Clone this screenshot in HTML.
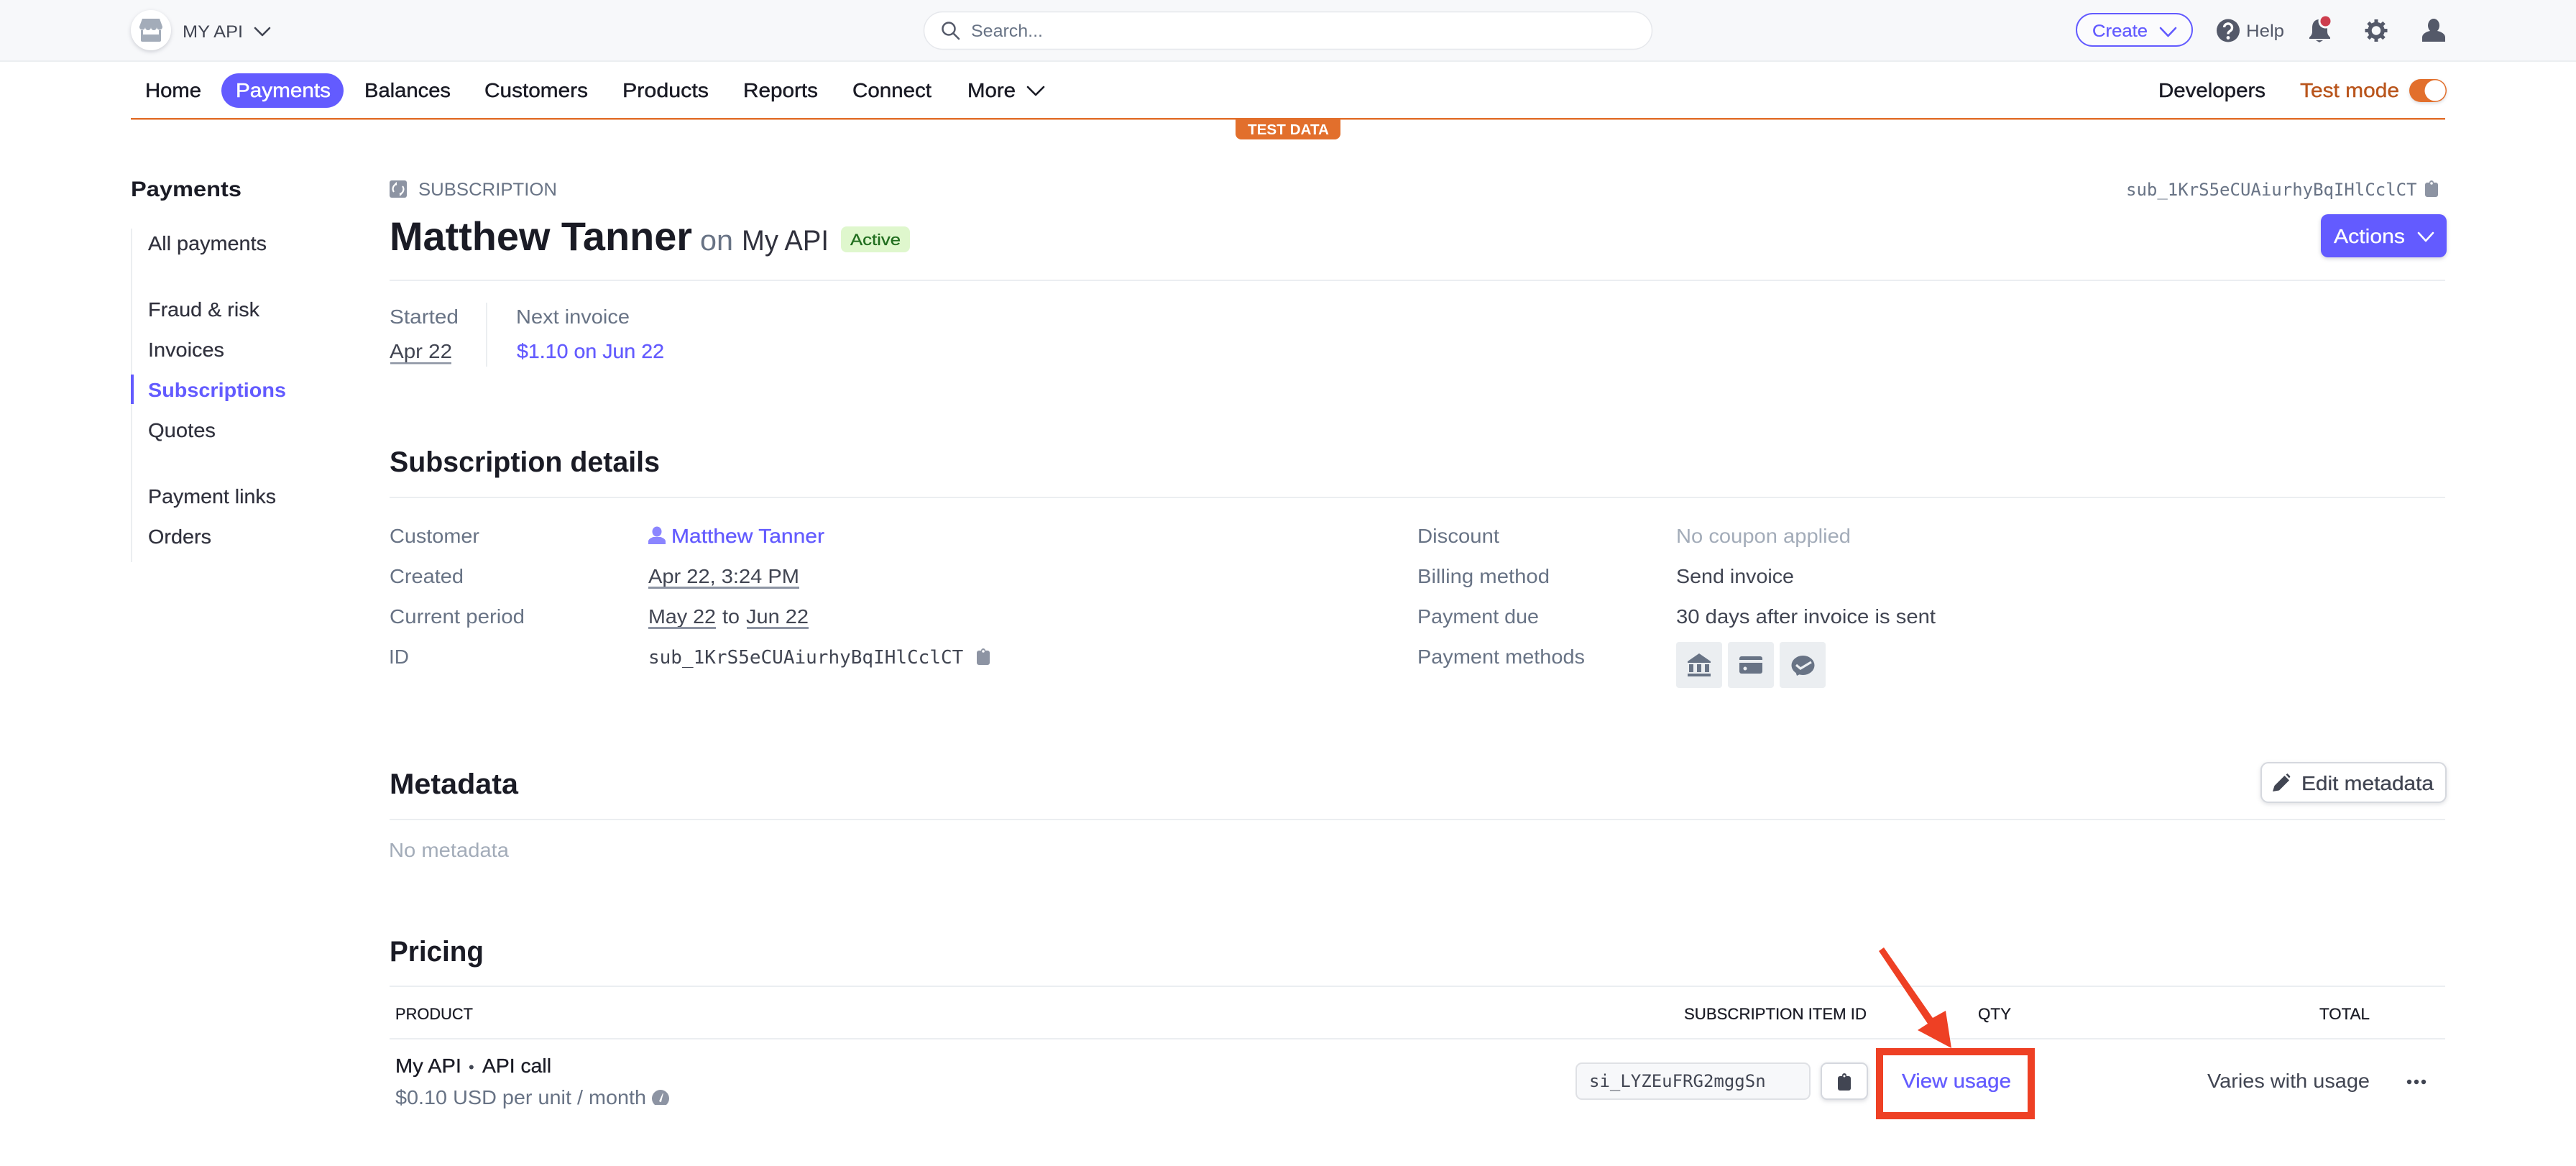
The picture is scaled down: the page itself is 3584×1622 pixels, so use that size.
<!DOCTYPE html>
<html lang="en">
<head>
<meta charset="utf-8">
<title>Subscription</title>
<style>
html,body{margin:0;padding:0;background:#fff;width:3584px;height:1622px;overflow:hidden}
svg{display:block}
text{font-family:"Liberation Sans",Arial,sans-serif;white-space:pre}
.mono{font-family:"DejaVu Sans Mono","Liberation Mono",monospace}
.nav{font-size:28px;fill:#1a1b25;stroke:#1a1b25;stroke-width:.45px}
.side{font-size:28px;fill:#30313d;stroke:#30313d;stroke-width:.2px}
.lab{font-size:28px;fill:#687385}
.val{font-size:28px;fill:#414552}
.lnk{font-size:28px;fill:#635bff;stroke:#635bff;stroke-width:.3px}
.h2{font-size:40px;font-weight:700;fill:#1a1b25}
.th{font-size:22px;fill:#1a1b25;stroke:#1a1b25;stroke-width:.25px}
.chev{fill:none;stroke-width:2.600;stroke-linecap:round;stroke-linejoin:round}
</style>
</head>
<body>
<svg xmlns="http://www.w3.org/2000/svg" width="3584" height="1622" viewBox="0 0 3584 1622">
<rect width="3584" height="1622" fill="#fff"/>

<!-- top bar -->
<rect width="3584" height="85" fill="#f7f8fa"/>
<rect y="84" width="3584" height="2" fill="#ebeef1"/>
<circle cx="210" cy="42" r="28" fill="#fff" style="filter:drop-shadow(0 2px 3px rgba(60,66,87,.22))"/>
<path d="M198 26h24l4 11a4 4 0 0 1-8 1 4 4 0 0 1-8 0 4 4 0 0 1-8 0 4 4 0 0 1-8-1z" fill="#a3acb9"/>
<path d="M196 42h3v6h22v-6h3v13a3 3 0 0 1-3 3h-22a3 3 0 0 1-3-3z" fill="#a3acb9"/>
<rect x="196" y="48" width="28" height="10" rx="2" fill="#a3acb9"/>
<text x="254" y="52" font-size="24" fill="#414552" textLength="84" lengthAdjust="spacingAndGlyphs">MY API</text>
<path class="chev" d="M355 39l10 10 10-10" stroke="#414552"/>

<!-- search -->
<rect x="1285.500" y="16.500" width="1013" height="52" rx="26" fill="#fff" stroke="#e6e8ec" stroke-width="1.500"/>
<circle cx="1320" cy="40" r="8.500" fill="none" stroke="#545969" stroke-width="2.500"/>
<path d="M1326 46l8 8" stroke="#545969" stroke-width="2.500" stroke-linecap="round"/>
<text x="1351" y="51" font-size="24" fill="#687385" textLength="100" lengthAdjust="spacingAndGlyphs">Search...</text>

<!-- top right -->
<rect x="2889" y="19" width="161" height="45" rx="22.500" fill="#fbfbfd" stroke="#635bff" stroke-width="2"/>
<text x="2911" y="51" font-size="24" fill="#635bff" stroke="#635bff" stroke-width=".25" textLength="77" lengthAdjust="spacingAndGlyphs">Create</text>
<path class="chev" d="M3006 39l10.500 11 10.500-11" stroke="#635bff"/>
<circle cx="3100" cy="42.500" r="16" fill="#545969"/>
<path d="M3094.500 38a5.500 5.500 0 1 1 8.500 5c-2 1.200-3 2-3 4.500" fill="none" stroke="#fff" stroke-width="3.400"/>
<circle cx="3100" cy="52.500" r="2.400" fill="#fff"/>
<text x="3125" y="51" font-size="24" fill="#545969" textLength="53" lengthAdjust="spacingAndGlyphs">Help</text>
<path d="M3227 27c-7 0-10 5-10 12v5c0 4-2 6-4 8v2h29v-2c-2-2-4-4-4-8v-5c0-7-4-12-11-12z" fill="#545969"/>
<path d="M3222 56h10l-5 3z" fill="#545969"/>
<circle cx="3235.500" cy="29.500" r="10" fill="#f7f8fa"/>
<circle cx="3235.500" cy="29.500" r="7" fill="#cd3d4d"/>
<circle cx="3306" cy="42.500" r="9" fill="none" stroke="#545969" stroke-width="5.500"/>
<path stroke="#545969" stroke-width="5" d="M3306 27v6M3306 52v6M3290.500 42.500h6M3315.500 42.500h6M3295 31.500l4.200 4.200M3312.800 49.300l4.200 4.200M3317 31.500l-4.200 4.200M3299.200 49.300l-4.200 4.200"/>
<ellipse cx="3386" cy="35.500" rx="8" ry="9.500" fill="#545969"/>
<path d="M3370 58v-6c0-5 6-8 11-9h10c5 1 11 4 11 9v6z" fill="#545969"/>

<!-- nav -->
<text class="nav" x="202" y="135" textLength="78" lengthAdjust="spacingAndGlyphs">Home</text>
<rect x="308" y="102" width="170" height="48" rx="24" fill="#635bff"/>
<text class="nav" x="328" y="135" textLength="132" lengthAdjust="spacingAndGlyphs" style="fill:#fff;stroke:#fff">Payments</text>
<text class="nav" x="507" y="135" textLength="120" lengthAdjust="spacingAndGlyphs">Balances</text>
<text class="nav" x="674" y="135" textLength="144" lengthAdjust="spacingAndGlyphs">Customers</text>
<text class="nav" x="866" y="135" textLength="120" lengthAdjust="spacingAndGlyphs">Products</text>
<text class="nav" x="1034" y="135" textLength="104" lengthAdjust="spacingAndGlyphs">Reports</text>
<text class="nav" x="1186" y="135" textLength="110" lengthAdjust="spacingAndGlyphs">Connect</text>
<text class="nav" x="1346" y="135" textLength="67" lengthAdjust="spacingAndGlyphs">More</text>
<path class="chev" d="M1430 121l11 11 11-11" stroke="#1a1b25"/>
<text class="nav" x="3003" y="135" textLength="149" lengthAdjust="spacingAndGlyphs">Developers</text>
<text x="3200" y="135" font-size="28" fill="#b9551c" stroke="#b9551c" stroke-width=".4" textLength="138" lengthAdjust="spacingAndGlyphs">Test mode</text>
<rect x="3352" y="110" width="52" height="32" rx="16" fill="#e26f2c" style="filter:drop-shadow(0 2px 2px rgba(60,66,87,.18))"/>
<circle cx="3388" cy="126" r="14.500" fill="#fff"/>

<rect x="182" y="164" width="3220" height="2.500" fill="#e26f2c"/>
<path d="M1719 164h146v22a8 8 0 0 1-8 8h-130a8 8 0 0 1-8-8z" fill="#e26f2c"/>
<text x="1736" y="187" font-size="20.500" font-weight="700" fill="#fff" textLength="113" lengthAdjust="spacingAndGlyphs">TEST DATA</text>

<!-- sidebar -->
<text x="182" y="273" font-size="30" font-weight="700" fill="#1a1b25" textLength="154" lengthAdjust="spacingAndGlyphs">Payments</text>
<rect x="182" y="318" width="2" height="464" fill="#ebeef1"/>
<text class="side" x="206" y="348" textLength="165" lengthAdjust="spacingAndGlyphs">All payments</text>
<text class="side" x="206" y="440" textLength="155" lengthAdjust="spacingAndGlyphs">Fraud &amp; risk</text>
<text class="side" x="206" y="496" textLength="106" lengthAdjust="spacingAndGlyphs">Invoices</text>
<rect x="182" y="521" width="4" height="41" fill="#635bff"/>
<text x="206" y="552" font-size="28" font-weight="700" fill="#635bff" textLength="192" lengthAdjust="spacingAndGlyphs">Subscriptions</text>
<text class="side" x="206" y="608" textLength="94" lengthAdjust="spacingAndGlyphs">Quotes</text>
<text class="side" x="206" y="700" textLength="178" lengthAdjust="spacingAndGlyphs">Payment links</text>
<text class="side" x="206" y="756" textLength="88" lengthAdjust="spacingAndGlyphs">Orders</text>

<!-- header -->
<rect x="542" y="251" width="24" height="24" rx="3" fill="#8d94a3"/>
<path d="M552 256a7 7 0 0 0-4 11M556 270a7 7 0 0 0 4-11" fill="none" stroke="#fff" stroke-width="2.200"/>
<path d="M552 253v5l-3-2.500zM556 273v-5l3 2.500z" fill="#fff"/>
<text x="582" y="272" font-size="25" fill="#687385" textLength="193" lengthAdjust="spacingAndGlyphs">SUBSCRIPTION</text>
<text class="mono" x="2958" y="272" font-size="24" fill="#687385">sub_1KrS5eCUAiurhyBqIHlCclCT</text>
<path d="M3377 254h3a3 3 0 0 1 6 0h3a3 3 0 0 1 3 3v14a3 3 0 0 1-3 3h-12a3 3 0 0 1-3-3v-14a3 3 0 0 1 3-3z" fill="#8d94a3"/>
<circle cx="3383" cy="255" r="1.800" fill="#fff"/>

<text x="542" y="348" font-size="56" font-weight="700" fill="#1a1b25" textLength="421" lengthAdjust="spacingAndGlyphs">Matthew Tanner</text>
<text x="974" y="348" font-size="40" fill="#687385" textLength="46" lengthAdjust="spacingAndGlyphs">on</text>
<text x="1032" y="348" font-size="40" fill="#30313d" textLength="121" lengthAdjust="spacingAndGlyphs">My API</text>
<rect x="1170" y="315" width="96" height="36" rx="8" fill="#dff7cd"/>
<text x="1183" y="341" font-size="22" fill="#216e1f" stroke="#216e1f" stroke-width=".3" textLength="70" lengthAdjust="spacingAndGlyphs">Active</text>

<rect x="3229" y="298" width="175" height="60" rx="10" fill="#635bff" style="filter:drop-shadow(0 2px 3px rgba(60,66,87,.22))"/>
<text x="3247" y="338" font-size="28" fill="#fff" stroke="#fff" stroke-width=".3" textLength="99" lengthAdjust="spacingAndGlyphs">Actions</text>
<path class="chev" d="M3365 324l10 11 10-11" stroke="#fff"/>

<rect x="542" y="389" width="2860" height="2" fill="#ebeef1"/>

<text class="lab" x="542" y="450" textLength="96" lengthAdjust="spacingAndGlyphs">Started</text>
<rect x="676" y="421" width="2" height="89" fill="#ebeef1"/>
<text class="lab" x="718" y="450" textLength="158" lengthAdjust="spacingAndGlyphs">Next invoice</text>
<text class="val" x="542" y="498" textLength="87" lengthAdjust="spacingAndGlyphs">Apr 22</text>
<rect x="543" y="504" width="85" height="2.500" fill="#8d94a3"/>
<text class="lnk" x="719" y="498" textLength="205" lengthAdjust="spacingAndGlyphs">$1.10 on Jun 22</text>

<!-- Subscription details -->
<text class="h2" x="542" y="656" textLength="376" lengthAdjust="spacingAndGlyphs">Subscription details</text>
<rect x="542" y="691" width="2860" height="2" fill="#ebeef1"/>

<text class="lab" x="542" y="755" textLength="125" lengthAdjust="spacingAndGlyphs">Customer</text>
<text class="lab" x="542" y="811" textLength="103" lengthAdjust="spacingAndGlyphs">Created</text>
<text class="lab" x="542" y="867" textLength="188" lengthAdjust="spacingAndGlyphs">Current period</text>
<text class="lab" x="541" y="923" textLength="28" lengthAdjust="spacingAndGlyphs">ID</text>

<ellipse cx="914" cy="739.500" rx="6.500" ry="7" fill="#8b85ff"/>
<path d="M902 757v-4c0-3 4-5 7-6h10c3 1 7 3 7 6v4z" fill="#8b85ff"/>
<text class="lnk" x="934" y="755" textLength="213" lengthAdjust="spacingAndGlyphs">Matthew Tanner</text>

<text class="val" x="902" y="811" textLength="210" lengthAdjust="spacingAndGlyphs">Apr 22, 3:24 PM</text>
<rect x="902" y="816" width="210" height="3" fill="#8d94a3"/>
<text class="val" x="902" y="867" textLength="94" lengthAdjust="spacingAndGlyphs">May 22</text>
<rect x="902" y="872" width="94" height="3" fill="#8d94a3"/>
<text class="val" x="1005" y="867" textLength="24" lengthAdjust="spacingAndGlyphs">to</text>
<text class="val" x="1038" y="867" textLength="87" lengthAdjust="spacingAndGlyphs">Jun 22</text>
<rect x="1039" y="872" width="86" height="3" fill="#8d94a3"/>
<text class="mono" x="902" y="923" font-size="26" fill="#414552">sub_1KrS5eCUAiurhyBqIHlCclCT</text>
<path d="M1362 905h3a3 3 0 0 1 6 0h3a3 3 0 0 1 3 3v14a3 3 0 0 1-3 3h-12a3 3 0 0 1-3-3v-14a3 3 0 0 1 3-3z" fill="#8d94a3"/>
<circle cx="1368" cy="906" r="1.800" fill="#fff"/>

<text class="lab" x="1972" y="755" textLength="114" lengthAdjust="spacingAndGlyphs">Discount</text>
<text class="lab" x="1972" y="811" textLength="184" lengthAdjust="spacingAndGlyphs">Billing method</text>
<text class="lab" x="1972" y="867" textLength="169" lengthAdjust="spacingAndGlyphs">Payment due</text>
<text class="lab" x="1972" y="923" textLength="233" lengthAdjust="spacingAndGlyphs">Payment methods</text>
<text x="2332" y="755" font-size="28" fill="#a3acb9" textLength="243" lengthAdjust="spacingAndGlyphs">No coupon applied</text>
<text class="val" x="2332" y="811" textLength="164" lengthAdjust="spacingAndGlyphs">Send invoice</text>
<text class="val" x="2332" y="867" textLength="361" lengthAdjust="spacingAndGlyphs">30 days after invoice is sent</text>

<rect x="2332" y="893" width="64" height="64" rx="4" fill="#ebeef1"/>
<rect x="2404" y="893" width="64" height="64" rx="4" fill="#ebeef1"/>
<rect x="2476" y="893" width="64" height="64" rx="4" fill="#ebeef1"/>
<path d="M2364 909l16 11v2h-32v-2z" fill="#687385"/>
<path d="M2350 924h6v11h-6zM2361 924h6v11h-6zM2372 924h6v11h-6zM2348 937h32v4h-32z" fill="#687385"/>
<path d="M2423 913h26a3 3 0 0 1 3 3v2h-32v-2a3 3 0 0 1 3-3z" fill="#687385"/>
<path d="M2420 922h32v12a3 3 0 0 1-3 3h-26a3 3 0 0 1-3-3z" fill="#687385"/>
<circle cx="2428" cy="930" r="2.500" fill="#ebeef1"/>
<ellipse cx="2508.500" cy="925.500" rx="16" ry="13.500" fill="#687385"/>
<path d="M2498 934l2 6 6-3z" fill="#687385"/>
<path d="M2499 925l6 5 15-9" fill="none" stroke="#ebeef1" stroke-width="3.200"/>

<!-- Metadata -->
<text class="h2" x="542" y="1104" textLength="179" lengthAdjust="spacingAndGlyphs">Metadata</text>
<rect x="3146" y="1061" width="257" height="55" rx="10" fill="#fff" stroke="#d5d8de" stroke-width="2" style="filter:drop-shadow(0 2px 3px rgba(60,66,87,.16))"/>
<path d="M3162 1101l2.500-8 14-14 6.500 6.500-14 14z" fill="#414552"/>
<path d="M3180.500 1077.500l2-1.500 4 4-1.500 2.500z" fill="#414552"/>
<text x="3202" y="1099" font-size="28" fill="#414552" stroke="#414552" stroke-width=".3" textLength="184" lengthAdjust="spacingAndGlyphs">Edit metadata</text>
<rect x="542" y="1139" width="2860" height="2" fill="#ebeef1"/>
<text x="541" y="1192" font-size="28" fill="#a3acb9" textLength="167" lengthAdjust="spacingAndGlyphs">No metadata</text>

<!-- Pricing -->
<text class="h2" x="542" y="1337" textLength="131" lengthAdjust="spacingAndGlyphs">Pricing</text>
<rect x="542" y="1371" width="2860" height="2" fill="#ebeef1"/>
<text class="th" x="550" y="1418" textLength="108" lengthAdjust="spacingAndGlyphs">PRODUCT</text>
<text class="th" x="2343" y="1418" textLength="254" lengthAdjust="spacingAndGlyphs">SUBSCRIPTION ITEM ID</text>
<text class="th" x="2752" y="1418" textLength="46" lengthAdjust="spacingAndGlyphs">QTY</text>
<text class="th" x="3227" y="1418" textLength="70" lengthAdjust="spacingAndGlyphs">TOTAL</text>
<rect x="542" y="1444" width="2860" height="2" fill="#ebeef1"/>

<text x="550" y="1492" font-size="28" fill="#1a1b25" stroke="#1a1b25" stroke-width=".3" textLength="92" lengthAdjust="spacingAndGlyphs">My API</text>
<text x="652" y="1492" font-size="22" fill="#414552">•</text>
<text x="671" y="1492" font-size="28" fill="#1a1b25" stroke="#1a1b25" stroke-width=".3" textLength="96" lengthAdjust="spacingAndGlyphs">API call</text>
<text class="lab" x="550" y="1536" textLength="349" lengthAdjust="spacingAndGlyphs">$0.10 USD per unit / month</text>
<path d="M911 1537a12 12 0 1 1 16 0z" fill="#8d94a3"/>
<path d="M917 1532l5-11 .8.300-3 12z" fill="#fff"/>

<rect x="2193" y="1479" width="325" height="50" rx="8" fill="#f7f8fa" stroke="#dfe1e5" stroke-width="2"/>
<text class="mono" x="2211" y="1512" font-size="24" fill="#414552">si_LYZEuFRG2mggSn</text>
<rect x="2534" y="1479" width="64" height="50" rx="8" fill="#fff" stroke="#d5d8de" stroke-width="2" style="filter:drop-shadow(0 2px 3px rgba(60,66,87,.18))"/>
<rect x="2557" y="1497" width="18" height="20" rx="3" fill="#414552"/>
<circle cx="2566" cy="1496" r="3" fill="#414552"/>
<circle cx="2566" cy="1497" r="1.500" fill="#fff"/>

<text x="2646" y="1513" font-size="28" fill="#635bff" stroke="#635bff" stroke-width=".3" textLength="152" lengthAdjust="spacingAndGlyphs">View usage</text>
<text x="3071" y="1513" font-size="28" fill="#414552" textLength="226" lengthAdjust="spacingAndGlyphs">Varies with usage</text>
<circle cx="3352" cy="1505" r="3.200" fill="#414552"/>
<circle cx="3362" cy="1505" r="3.200" fill="#414552"/>
<circle cx="3372" cy="1505" r="3.200" fill="#414552"/>

<!-- annotation -->
<rect x="2615" y="1463" width="211" height="89" fill="none" stroke="#ee4024" stroke-width="10"/>
<polygon points="2621,1318 2689,1416 2707,1406 2715,1458 2668,1433 2682,1424 2614,1323" fill="#ee4024"/>
</svg>
</body>
</html>
